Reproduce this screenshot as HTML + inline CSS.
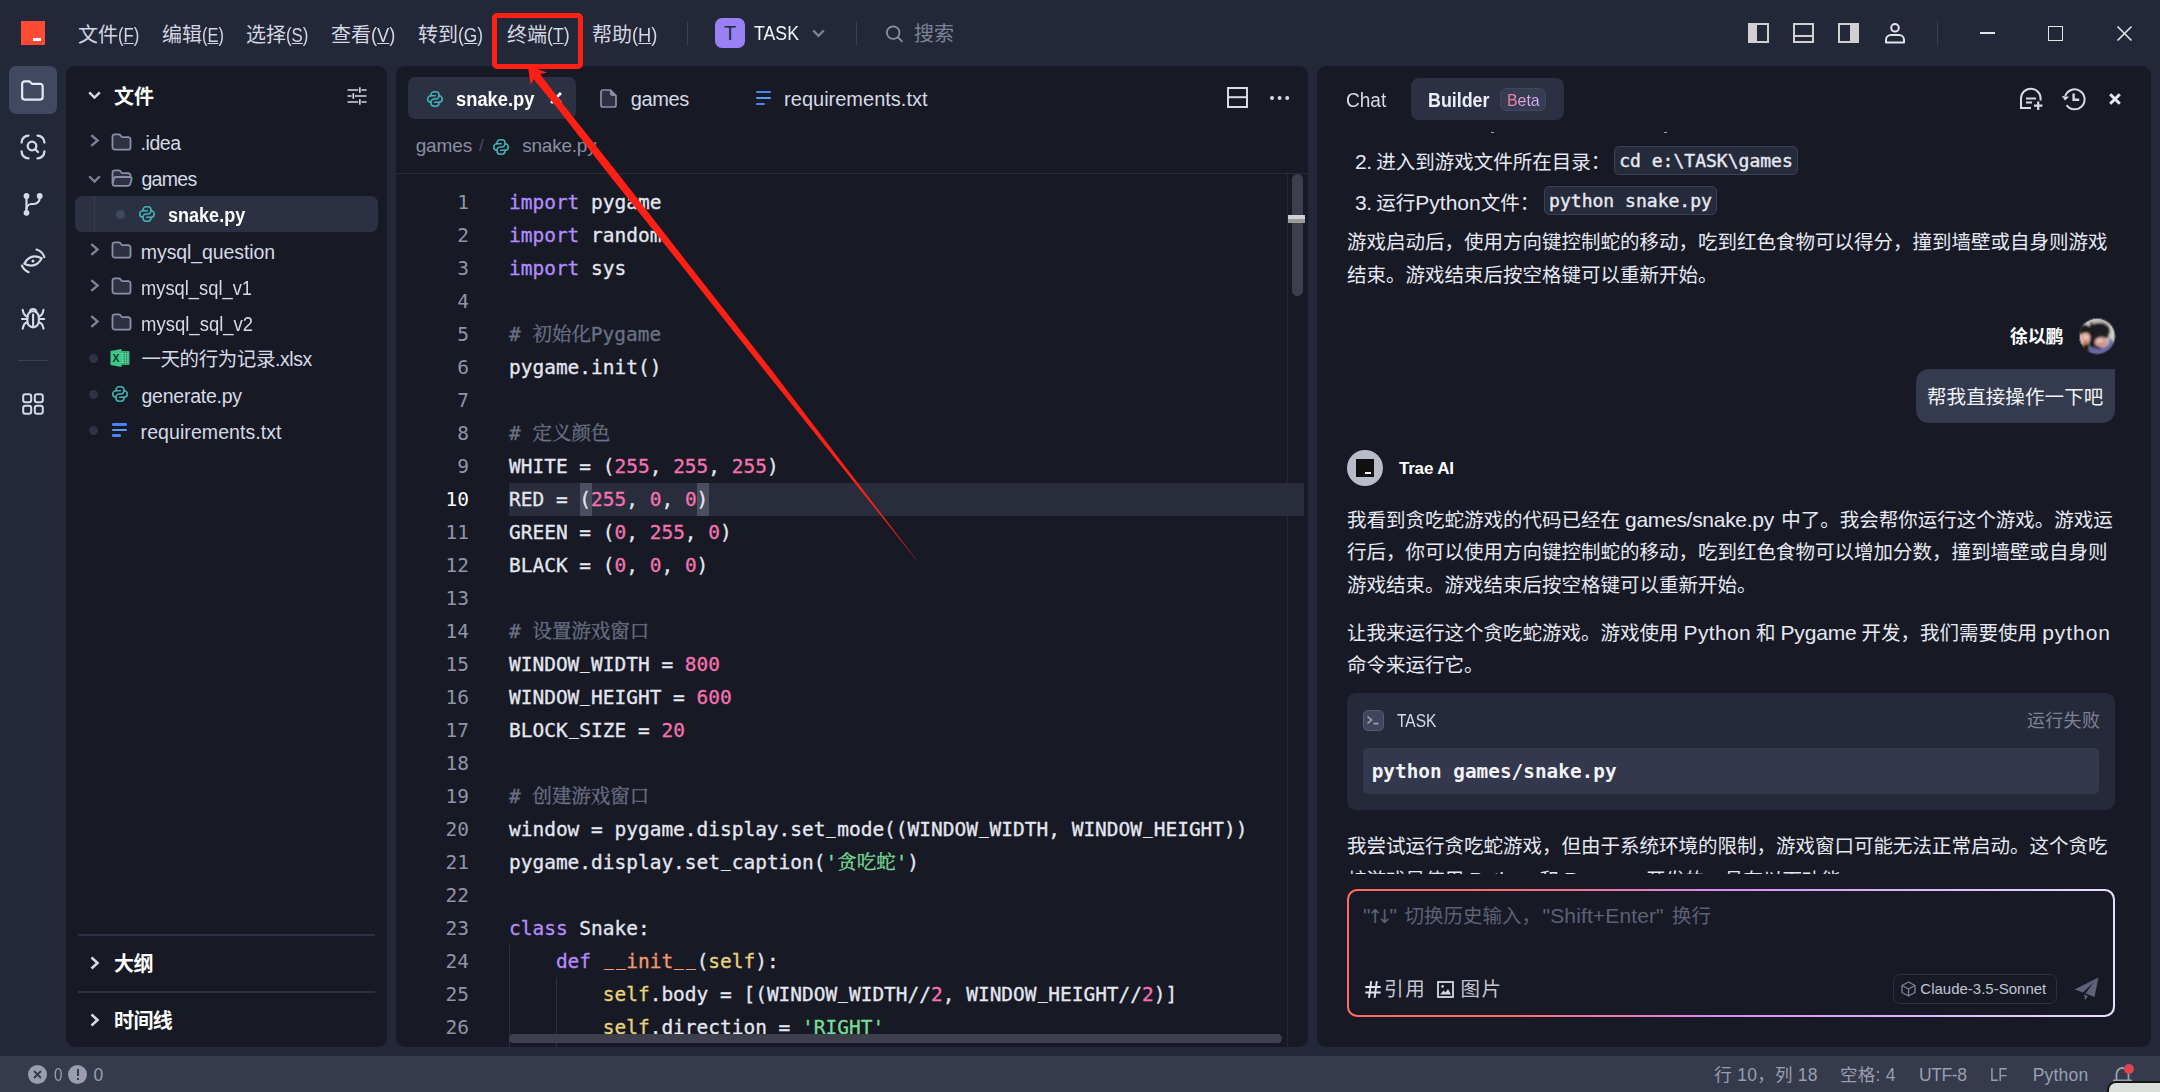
<!DOCTYPE html>
<html lang="zh-CN">
<head>
<meta charset="utf-8">
<title>Trae - snake.py</title>
<style>
*{box-sizing:border-box;margin:0;padding:0}
html,body{width:2160px;height:1092px;overflow:hidden;background:#232838}
body{position:relative;font-family:"Liberation Sans","Noto Sans CJK SC",sans-serif;color:#d6d9e6;font-size:19px}
.abs{position:absolute}
.t{position:absolute;white-space:nowrap;line-height:24px;transform-origin:0 50%}
svg{position:absolute;overflow:visible}
.panel{position:absolute;background:#171a25;border-radius:9px}
.menu{position:absolute;top:22.5px;font-size:20px;line-height:24px;color:#d3d6e3;white-space:nowrap;transform-origin:0 50%}
.ib{display:inline-block;transform-origin:0 50%}
.menu u{text-decoration-thickness:1px;text-underline-offset:1px}
.row{position:absolute;left:141px;font-size:19.5px;line-height:24px;white-space:nowrap;color:#d6d9e6;transform-origin:0 50%}
.code{position:absolute;left:509px;top:186.2px;font-family:"DejaVu Sans Mono","Noto Serif CJK SC",monospace;font-size:19.48px;line-height:33px;white-space:pre;color:#e4e6f0;-webkit-text-stroke:0.3px}
.ln{position:absolute;left:420px;width:49px;top:186.2px;text-align:right;font-family:"DejaVu Sans Mono",monospace;font-size:19.48px;line-height:33px;color:#9094a6;white-space:pre}
.u{display:inline-block;transform:translateY(-2.8px) scaleX(0.82)}
.k{color:#b48cfa}.n{color:#f472b0}.c{color:#6b7085}.s{color:#78dc94}.f{color:#f5976b}.se{color:#e8d37a}
.p{position:absolute;margin-top:1px;left:1347px;font-size:19.5px;line-height:33px;word-spacing:-0.4px;color:#e6e8f2;white-space:nowrap;transform-origin:0 50%}
.la{font-size:21px}
.ic{position:absolute;height:29px;border:1px solid #3a4058;background:#262b3b;border-radius:5px;font-family:"DejaVu Sans Mono",monospace;font-size:18.05px;line-height:27px;color:#e6e8f2;-webkit-text-stroke:0.4px #e6e8f2;white-space:pre;text-align:center}
.st{position:absolute;top:1063px;font-size:17.5px;line-height:24px;color:#9a9eb0;white-space:nowrap;transform-origin:0 50%}
</style>
</head>
<body>
<style>
#m1{transform:scaleX(0.8345)}
#m2{transform:scaleX(0.8200)}
#m3{transform:scaleX(0.8410)}
#m4{transform:scaleX(0.9127)}
#m5{transform:scaleX(0.8667)}
#m6{transform:scaleX(0.8875)}
#m7{transform:scaleX(0.9159)}
#task{transform:scaleX(0.8860);margin-left:-0.09px}
#sch{letter-spacing:-0.090px}
#hfile{letter-spacing:0.090px;margin-left:-0.09px}
#r1{letter-spacing:-0.450px;margin-left:-0.45px}
#r2{letter-spacing:-0.675px;margin-left:0.45px}
#r3{transform:scaleX(0.9250)}
#r4{letter-spacing:-0.090px;margin-left:-0.18px}
#r5{transform:scaleX(0.9401);margin-left:-0.18px}
#r6{transform:scaleX(0.9493);margin-left:-0.18px}
#r7{letter-spacing:-0.417px;margin-left:0.45px}
#r8{letter-spacing:-0.234px;margin-left:0.45px}
#r9{letter-spacing:0.078px;margin-left:-0.45px}
#hout{letter-spacing:-0.540px;margin-left:-0.09px}
#htl{letter-spacing:-0.540px;margin-left:-0.09px}
#tab1{transform:scaleX(0.9160);margin-left:0.60px}
#tab2{letter-spacing:-0.405px;margin-left:0.72px}
#tab3{margin-left:-0.90px}
#bc1{letter-spacing:-0.112px;margin-left:-0.36px}
#bc2{letter-spacing:-0.250px;margin-left:0.30px}
#chat{transform:scaleX(0.9527);margin-left:-0.63px}
#bld{transform:scaleX(0.8922);margin-left:-0.54px}
#beta{transform:scaleX(0.9352);margin-left:-0.45px}
#l1a{letter-spacing:-0.291px}
#l2a{letter-spacing:0.342px}
#l2b{letter-spacing:-0.162px}
#l2c{letter-spacing:0.954px}
#ph2{letter-spacing:0.128px}
#uname{letter-spacing:-0.270px}
#umsg{letter-spacing:0.113px;margin-left:-1.08px}
#trae{letter-spacing:-0.165px;margin-left:0.90px}
#ctask{transform:scaleX(0.8617);margin-left:0.09px}
#cfail{letter-spacing:0.300px}
#ccmd{letter-spacing:0.018px;margin-left:-0.36px}
#model{margin-left:-0.18px}
#yy{letter-spacing:1.710px;margin-left:-0.90px}
#tp{letter-spacing:1.440px;margin-left:-1.44px}
#s1{letter-spacing:0.248px;margin-left:-0.18px}
#s2{letter-spacing:0.248px;margin-left:-0.45px}
#s3{letter-spacing:-0.427px;margin-left:-0.90px}
#s4{transform:scaleX(0.8573);margin-left:-1.71px}
#s5{letter-spacing:0.216px;margin-left:-0.36px}
#z1{transform:scaleX(0.8722);margin-left:0.09px}
</style>
<!-- TITLE BAR -->
<div class="abs" style="left:21px;top:21px;width:24px;height:24px;background:#ff4a36"><div class="abs" style="left:12px;top:17px;width:8px;height:3px;background:#fff"></div></div>
<div class="menu" style="left:78px">文件<span id="m1" class="ib">(<u>F</u>)</span></div>
<div class="menu" style="left:162px">编辑<span id="m2" class="ib">(<u>E</u>)</span></div>
<div class="menu" style="left:246px">选择<span id="m3" class="ib">(<u>S</u>)</span></div>
<div class="menu" style="left:331px">查看<span id="m4" class="ib">(<u>V</u>)</span></div>
<div class="menu" style="left:418px">转到<span id="m5" class="ib">(<u>G</u>)</span></div>
<div class="menu" style="left:507px">终端<span id="m6" class="ib">(<u>T</u>)</span></div>
<div class="menu" style="left:592px">帮助<span id="m7" class="ib">(<u>H</u>)</span></div>
<div class="abs" style="left:687px;top:21px;width:1px;height:24px;background:#3a4055"></div>
<div class="abs" style="left:715px;top:18px;width:30px;height:30px;border-radius:7px;background:#9a80f5;color:#232838;font-size:20px;line-height:30px;text-align:center">T</div>
<div id="task" class="t" style="left:754px;top:21px;font-size:20px;color:#f5f6fa">TASK</div>
<svg style="left:812px;top:29px" width="13" height="9" viewBox="0 0 13 9"><path d="M1.2 1.5 L6.5 6.8 L11.8 1.5" fill="none" stroke="#7d8297" stroke-width="2.4"/></svg>
<div class="abs" style="left:856px;top:21px;width:1px;height:24px;background:#3a4055"></div>
<svg style="left:884px;top:24px" width="20" height="20" viewBox="0 0 20 20"><circle cx="9.2" cy="8.6" r="6.3" fill="none" stroke="#8a8fa3" stroke-width="1.8"/><path d="M13.8 13.2 L18 17.4" stroke="#8a8fa3" stroke-width="1.8" stroke-linecap="round"/></svg>
<div id="sch" class="t" style="left:914px;top:22px;font-size:20px;color:#7d8297">搜索</div>
<!-- right icons -->
<svg style="left:1748px;top:23px" width="21" height="20" viewBox="0 0 21 20"><rect x="1" y="1" width="19" height="18" fill="none" stroke="#d0d0d0" stroke-width="2"/><rect x="1" y="1" width="8" height="18" fill="#d0d0d0"/></svg>
<svg style="left:1793px;top:23px" width="21" height="20" viewBox="0 0 21 20"><rect x="1" y="1" width="19" height="18" fill="none" stroke="#d0d0d0" stroke-width="2"/><path d="M1 13 H20" stroke="#d0d0d0" stroke-width="2"/></svg>
<svg style="left:1838px;top:23px" width="21" height="20" viewBox="0 0 21 20"><rect x="1" y="1" width="19" height="18" fill="none" stroke="#d0d0d0" stroke-width="2"/><rect x="12" y="1" width="8" height="18" fill="#d0d0d0"/></svg>
<svg style="left:1885px;top:23px" width="20" height="21" viewBox="0 0 20 21"><circle cx="10" cy="4.8" r="3.8" fill="none" stroke="#e4e4e8" stroke-width="2"/><path d="M1 19.5 V17 a5 5 0 0 1 5 -5 H14 a5 5 0 0 1 5 5 V19.5 Z" fill="none" stroke="#e4e4e8" stroke-width="2" stroke-linejoin="round"/></svg>
<div class="abs" style="left:1937px;top:21px;width:1px;height:24px;background:#3a4055"></div>
<div class="abs" style="left:1980px;top:32px;width:15px;height:1.5px;background:#e4e4e8"></div>
<div class="abs" style="left:2048px;top:26px;width:15px;height:15px;border:1.8px solid #e4e4e8"></div>
<svg style="left:2117px;top:26px" width="15" height="15" viewBox="0 0 15 15"><path d="M0.5 0.5 L14.5 14.5 M14.5 0.5 L0.5 14.5" stroke="#e4e4e8" stroke-width="1.6"/></svg>
<!-- ACTIVITY BAR -->
<div class="abs" style="left:9px;top:66px;width:48px;height:48px;border-radius:7px;background:#414960"></div>
<svg style="left:21.2px;top:79.6px" width="22.8" height="20.9" viewBox="0 0 24 22"><path d="M1.2 4 a2.6 2.6 0 0 1 2.6 -2.6 h5 l2.6 2.6 h8.8 a2.6 2.6 0 0 1 2.6 2.6 v11.4 a2.6 2.6 0 0 1 -2.6 2.6 h-16.4 a2.6 2.6 0 0 1 -2.6 -2.6 z" fill="none" stroke="#e8eaf3" stroke-width="2.3" stroke-linejoin="round"/></svg>
<!-- scan search -->
<svg style="left:20px;top:134px" width="26" height="26" viewBox="0 0 26 26" fill="none" stroke="#d6d9e6" stroke-width="2.3" stroke-linecap="round"><path d="M1.6 8.5 a7 7 0 0 1 6.9 -6.9"/><path d="M17.5 1.6 a7 7 0 0 1 6.9 6.9"/><path d="M24.4 17.5 a7 7 0 0 1 -6.9 6.9"/><path d="M8.5 24.4 a7 7 0 0 1 -6.9 -6.9"/><circle cx="12" cy="12" r="4.3"/><path d="M15.3 15.3 L18 18"/></svg>
<!-- branch -->
<svg style="left:21px;top:191px" width="24" height="27" viewBox="0 0 24 27" fill="none" stroke="#d6d9e6" stroke-width="2.2"><path d="M5.5 5 V22"/><path d="M18.7 5 v2 a6 6 0 0 1 -6 6 h-2 a5.2 5.2 0 0 0 -5.2 5"/><circle cx="5.5" cy="5" r="2.9" fill="#d6d9e6" stroke="none"/><circle cx="18.7" cy="5" r="2.9" fill="#d6d9e6" stroke="none"/><circle cx="5.5" cy="21.8" r="2.9" fill="#d6d9e6" stroke="none"/></svg>
<!-- eye -->
<svg style="left:19px;top:247px" width="28" height="28" viewBox="0 0 28 28" fill="none" stroke="#d6d9e6" stroke-width="2.1" stroke-linecap="round"><g transform="rotate(-17 14 14)"><path d="M4.8 14 Q14 5.2 23.2 14 Q14 22.8 4.8 14 Z" stroke-linejoin="round"/></g><circle cx="14" cy="14" r="1.5" fill="#d6d9e6" stroke="none"/><path d="M17.5 2.5 A12 12 0 0 1 25.35 10.1"/><path d="M9.7 25.2 A12 12 0 0 1 2.9 18.5"/></svg>
<!-- bug -->
<svg style="left:21px;top:306px" width="24" height="24" viewBox="0 0 24 24" fill="none" stroke="#d6d9e6" stroke-width="2.1" stroke-linecap="round"><path d="M6.4 11.2 a5.7 6 0 0 1 11.4 0 v4 a5.7 6.2 0 0 1 -11.4 0 z"/><path d="M8.9 5.6 a3.3 3.3 0 0 1 6.4 0"/><path d="M12.1 8.5 V21"/><path d="M6.4 10.6 Q2.6 9.4 1.7 3.8"/><path d="M17.8 10.6 Q21.6 9.4 22.5 3.8"/><path d="M6.2 13 H1"/><path d="M18 13 H23.2"/><path d="M6.4 16.4 Q2.6 17 1.7 22.6"/><path d="M17.8 16.4 Q21.6 17 22.5 22.6"/></svg>
<div class="abs" style="left:18px;top:360px;width:30px;height:1px;background:#3a4055"></div>
<!-- grid -->
<svg style="left:22px;top:393px" width="22" height="22" viewBox="0 0 22 22" fill="none" stroke="#d6d9e6" stroke-width="2"><rect x="1.2" y="1.2" width="8" height="8" rx="2.2"/><rect x="12.8" y="1.2" width="8" height="8" rx="2.2"/><rect x="1.2" y="12.8" width="8" height="8" rx="2.2"/><rect x="12.8" y="12.8" width="8" height="8" rx="2.2"/></svg>

<!-- SIDEBAR -->
<div class="panel" style="left:66px;top:66px;width:321px;height:981px"></div>
<svg style="left:88px;top:91px" width="13" height="9" viewBox="0 0 13 9"><path d="M1.2 1.3 L6.5 6.6 L11.8 1.3" fill="none" stroke="#d6d9e6" stroke-width="2.5"/></svg>
<div id="hfile" class="t" style="left:114px;top:85px;font-size:20px;font-weight:bold;color:#fff">文件</div>
<svg style="left:347px;top:87px" width="20" height="18" viewBox="0 0 20 18" fill="none" stroke="#d6d9e6" stroke-width="1.7"><path d="M0.5 3 H11 M14.5 3 H19.5 M12.8 0.3 V5.7"/><path d="M0.5 9 H4.5 M8 9 H19.5 M6.3 6.3 V11.7"/><path d="M0.5 15 H11 M14.5 15 H19.5 M12.8 12.3 V17.7"/></svg>

<!-- selected row -->
<div class="abs" style="left:75px;top:196px;width:303px;height:36px;border-radius:7px;background:#2b3042"></div>
<div class="abs" style="left:94px;top:196px;width:1px;height:36px;background:#363c50"></div>

<!-- chevrons -->
<svg style="left:90px;top:134px" width="10" height="13" viewBox="0 0 10 13"><path d="M1.3 1.2 L7.6 6.5 L1.3 11.8" fill="none" stroke="#7d8297" stroke-width="2.3"/></svg>
<svg style="left:88px;top:175px" width="13" height="9" viewBox="0 0 13 9"><path d="M1.2 1.3 L6.5 6.6 L11.8 1.3" fill="none" stroke="#7d8297" stroke-width="2.3"/></svg>
<svg style="left:90px;top:243px" width="10" height="13" viewBox="0 0 10 13"><path d="M1.3 1.2 L7.6 6.5 L1.3 11.8" fill="none" stroke="#7d8297" stroke-width="2.3"/></svg>
<svg style="left:90px;top:279px" width="10" height="13" viewBox="0 0 10 13"><path d="M1.3 1.2 L7.6 6.5 L1.3 11.8" fill="none" stroke="#7d8297" stroke-width="2.3"/></svg>
<svg style="left:90px;top:315px" width="10" height="13" viewBox="0 0 10 13"><path d="M1.3 1.2 L7.6 6.5 L1.3 11.8" fill="none" stroke="#7d8297" stroke-width="2.3"/></svg>

<!-- folder icons -->
<svg style="left:111px;top:133px" width="21" height="18" viewBox="0 0 21 18"><path id="fold" d="M1.5 3.5 a2.2 2.2 0 0 1 2.2 -2.2 h4 q1 0 1.6 0.8 l1 1.4 q0.5 0.7 1.4 0.7 h5.6 a2.2 2.2 0 0 1 2.2 2.2 v8 a2.2 2.2 0 0 1 -2.2 2.2 h-13.6 a2.2 2.2 0 0 1 -2.2 -2.2 z" fill="#2d3141" stroke="#8a8fa8" stroke-width="1.8"/></svg>
<svg style="left:111px;top:169px" width="22" height="18" viewBox="0 0 22 18"><path d="M1.5 14.5 V3.5 a2.2 2.2 0 0 1 2.2 -2.2 h4 q1 0 1.6 0.8 l1 1.4 q0.5 0.7 1.4 0.7 h5.6 a2.2 2.2 0 0 1 2.2 2.2 v1.6" fill="#2d3141" stroke="#8a8fa8" stroke-width="1.8"/><path d="M3.6 8 h15.4 a1.6 1.6 0 0 1 1.6 2 l-1.3 5 a2.4 2.4 0 0 1 -2.3 1.8 h-13.4 a1.8 1.8 0 0 1 -1.8 -2.3 l1 -4.6 a2 2 0 0 1 1.8 -1.9 z" fill="#2d3141" stroke="#8a8fa8" stroke-width="1.8"/></svg>
<svg style="left:111px;top:241px" width="21" height="18" viewBox="0 0 21 18"><use href="#fold"/></svg>
<svg style="left:111px;top:277px" width="21" height="18" viewBox="0 0 21 18"><use href="#fold"/></svg>
<svg style="left:111px;top:313px" width="21" height="18" viewBox="0 0 21 18"><use href="#fold"/></svg>

<!-- dots -->
<div class="abs" style="left:115.5px;top:210px;width:9px;height:9px;border-radius:5px;background:#414861"></div>
<div class="abs" style="left:88.6px;top:354px;width:9px;height:9px;border-radius:5px;background:#2d3244"></div>
<div class="abs" style="left:88.6px;top:390px;width:9px;height:9px;border-radius:5px;background:#2d3244"></div>
<div class="abs" style="left:88.6px;top:426px;width:9px;height:9px;border-radius:5px;background:#2d3244"></div>

<!-- python icons -->
<svg style="left:139px;top:206px" width="16" height="16" viewBox="2.1 2.1 19.8 19.8" fill="none" stroke="#3fb5b5" stroke-width="1.9" stroke-linecap="round"><g id="py"><path d="M12.3 8 H7 a4 4 0 0 0 0 8"/><path d="M11.7 16 H17 a4 4 0 0 0 0 -8"/><path d="M7 8 v-1 a4 4 0 0 1 4 -4 h2 a4 4 0 0 1 4 4 v1 a4 4 0 0 1 -4 4 h-2 a4 4 0 0 0 -4 4 v1 a4 4 0 0 0 4 4 h2 a4 4 0 0 0 4 -4 v-1"/></g></svg>
<svg style="left:112px;top:386px" width="16" height="16" viewBox="2.1 2.1 19.8 19.8" fill="none" stroke="#3fb5b5" stroke-width="1.9" stroke-linecap="round"><use href="#py"/></svg>

<!-- excel icon -->
<svg style="left:110px;top:349px" width="20" height="18" viewBox="0 0 20 18"><rect x="8" y="2" width="11.5" height="14" rx="1" fill="#2fae72"/><path d="M11 4.6 h7.5 M11 6.8 h7.5 M11 9 h7.5 M11 11.2 h7.5 M11 13.4 h7.5" stroke="#8ee6b8" stroke-width="1"/><path d="M14.2 3 v12 M16.6 3 v12" stroke="#1f8f58" stroke-width="0.8"/><path d="M0.5 2 L11.5 0 V18 L0.5 16 Z" fill="#3fc68a"/><text x="6" y="13" font-family="Liberation Sans,sans-serif" font-weight="bold" font-size="10.5" fill="#17402c" text-anchor="middle">X</text></svg>

<!-- txt icon -->
<div class="abs" style="left:112px;top:423.2px;width:14.8px;height:2.5px;border-radius:1.2px;background:#4b83f2"></div>
<div class="abs" style="left:112px;top:428.6px;width:14.8px;height:2.5px;border-radius:1.2px;background:#5e98ff"></div>
<div class="abs" style="left:112px;top:434px;width:9px;height:2.5px;border-radius:1.2px;background:#4b83f2"></div>

<!-- labels -->
<div id="r1" class="row" style="top:131px">.idea</div>
<div id="r2" class="row" style="top:167px">games</div>
<div id="r3" class="row" style="top:203px;left:168px;font-weight:bold;color:#fff">snake.py</div>
<div id="r4" class="row" style="top:240px">mysql_question</div>
<div id="r5" class="row" style="top:276px">mysql_sql_v1</div>
<div id="r6" class="row" style="top:312px">mysql_sql_v2</div>
<div id="r7" class="row" style="top:347px">一天的行为记录.xlsx</div>
<div id="r8" class="row" style="top:384px">generate.py</div>
<div id="r9" class="row" style="top:420px">requirements.txt</div>

<!-- bottom sections -->
<div class="abs" style="left:78px;top:934px;width:297px;height:2px;background:#2b3042"></div>
<svg style="left:89.5px;top:955.5px" width="10" height="14" viewBox="0 0 10 14"><path d="M1.5 1.5 L7.5 7 L1.5 12.5" fill="none" stroke="#d6d9e6" stroke-width="2.6"/></svg>
<div id="hout" class="t" style="left:114px;top:952px;font-size:20px;font-weight:bold;color:#fff">大纲</div>
<div class="abs" style="left:78px;top:991px;width:297px;height:2px;background:#2b3042"></div>
<svg style="left:89.5px;top:1012.5px" width="10" height="14" viewBox="0 0 10 14"><path d="M1.5 1.5 L7.5 7 L1.5 12.5" fill="none" stroke="#d6d9e6" stroke-width="2.6"/></svg>
<div id="htl" class="t" style="left:114px;top:1009px;font-size:20px;font-weight:bold;color:#fff">时间线</div>
<!-- EDITOR -->
<div class="panel" style="left:396px;top:66px;width:912px;height:981px;overflow:hidden"></div>
<div class="abs" style="left:408px;top:77px;width:168px;height:42px;border-radius:7px;background:#2b3042"></div>
<svg style="left:427px;top:91px" width="16" height="16" viewBox="2.1 2.1 19.8 19.8" fill="none" stroke="#3fb5b5" stroke-width="1.9" stroke-linecap="round"><use href="#py"/></svg>
<div id="tab1" class="t" style="left:455px;top:87px;font-size:20px;font-weight:bold;color:#fff">snake.py</div>
<svg style="left:549.5px;top:92.4px" width="12" height="12" viewBox="0 0 11 11"><path d="M1 1 L10 10 M10 1 L1 10" stroke="#fff" stroke-width="2.6"/></svg>
<svg style="left:600px;top:89px" width="17" height="19" viewBox="0 0 17 19"><path d="M1 3 a2 2 0 0 1 2 -2 h7.5 l5.5 5.5 v9.5 a2 2 0 0 1 -2 2 h-11 a2 2 0 0 1 -2 -2 z" fill="#2d3141" stroke="#8a8fa8" stroke-width="1.7" stroke-linejoin="round"/><path d="M10.5 1 v3.5 a2 2 0 0 0 2 2 h3.5" fill="#8a8fa8" stroke="#8a8fa8" stroke-width="1.2"/></svg>
<div id="tab2" class="t" style="left:630px;top:87px;font-size:20px;color:#d6d9e6">games</div>
<div class="abs" style="left:756.4px;top:90.7px;width:15px;height:2.5px;border-radius:1.2px;background:#4b83f2"></div>
<div class="abs" style="left:756.4px;top:96.9px;width:15px;height:2.5px;border-radius:1.2px;background:#5e98ff"></div>
<div class="abs" style="left:756.4px;top:102.9px;width:8.5px;height:2.5px;border-radius:1.2px;background:#4b83f2"></div>
<div id="tab3" class="t" style="left:785px;top:87px;font-size:20px;color:#d6d9e6">requirements.txt</div>
<svg style="left:1227px;top:87px" width="21" height="21" viewBox="0 0 21 21" fill="none" stroke="#d6d9e6" stroke-width="2"><rect x="1" y="1" width="19" height="19"/><path d="M1 10.2 H20"/></svg>
<div class="abs" style="left:1270px;top:96px;width:4px;height:4px;border-radius:2px;background:#d6d9e6;box-shadow:7.6px 0 0 #d6d9e6,15.2px 0 0 #d6d9e6"></div>
<!-- breadcrumb -->
<div id="bc1" class="t" style="left:416px;top:134px;font-size:19px;color:#8a8fa3">games</div>
<div class="t" style="left:479px;top:134px;font-size:17px;color:#4a5068">/</div>
<svg style="left:493px;top:139px" width="16" height="16" viewBox="2.1 2.1 19.8 19.8" fill="none" stroke="#3fb5b5" stroke-width="1.9" stroke-linecap="round"><use href="#py"/></svg>
<div id="bc2" class="t" style="left:522px;top:134px;font-size:19px;color:#8a8fa3">snake.py</div>
<div class="abs" style="left:396px;top:173px;width:912px;height:1px;background:#262a3a"></div>
<div class="abs" style="left:1287px;top:174px;width:1px;height:873px;background:#232736"></div>
<!-- current line -->
<div class="abs" style="left:509px;top:483px;width:795px;height:33px;background:#282c3b"></div>
<div class="abs" style="left:580px;top:483px;width:12px;height:33px;background:#4a4f5f"></div>
<div class="abs" style="left:697px;top:483px;width:12px;height:33px;background:#4a4f5f"></div>
<!-- indent guides -->
<div class="abs" style="left:509px;top:945px;width:1px;height:102px;background:#2b3042"></div>
<div class="abs" style="left:556px;top:978px;width:1px;height:69px;background:#2b3042"></div>
<div class="ln">1
2
3
4
5
6
7
8
9
<span style="color:#fff">10</span>
11
12
13
14
15
16
17
18
19
20
21
22
23
24
25
26</div>
<div class="abs" style="left:396px;top:174px;width:912px;height:873px;overflow:hidden"><div class="code" style="left:113px;top:12.2px"><span class="k">import</span> pygame
<span class="k">import</span> random
<span class="k">import</span> sys

<span class="c"># 初始化Pygame</span>
pygame.init()

<span class="c"># 定义颜色</span>
WHITE = (<span class="n">255</span>, <span class="n">255</span>, <span class="n">255</span>)
RED = (<span class="n">255</span>, <span class="n">0</span>, <span class="n">0</span>)
GREEN = (<span class="n">0</span>, <span class="n">255</span>, <span class="n">0</span>)
BLACK = (<span class="n">0</span>, <span class="n">0</span>, <span class="n">0</span>)

<span class="c"># 设置游戏窗口</span>
WINDOW<span class="u">_</span>WIDTH = <span class="n">800</span>
WINDOW<span class="u">_</span>HEIGHT = <span class="n">600</span>
BLOCK<span class="u">_</span>SIZE = <span class="n">20</span>

<span class="c"># 创建游戏窗口</span>
window = pygame.display.set<span class="u">_</span>mode((WINDOW<span class="u">_</span>WIDTH, WINDOW<span class="u">_</span>HEIGHT))
pygame.display.set<span class="u">_</span>caption(<span class="s">'贪吃蛇'</span>)

<span class="k">class</span> Snake:
    <span class="k">def</span> <span class="f"><span class="u">_</span><span class="u">_</span>init<span class="u">_</span><span class="u">_</span></span>(<span class="se">self</span>):
        <span class="se">self</span>.body = [(WINDOW<span class="u">_</span>WIDTH//<span class="n">2</span>, WINDOW<span class="u">_</span>HEIGHT//<span class="n">2</span>)]
        <span class="se">self</span>.direction = <span class="s">'RIGHT'</span></div></div>
<!-- scrollbars -->
<div class="abs" style="left:1292px;top:174px;width:11px;height:122px;border-radius:6px;background:#3d404c"></div>
<div class="abs" style="left:1288px;top:215px;width:17px;height:8px;background:linear-gradient(#d0d0d0 0 45%,#9a9a9a 45% 100%)"></div>
<div class="abs" style="left:509px;top:1034px;width:773px;height:9px;border-radius:5px;background:#3d404c"></div>
<!-- CHAT PANEL -->
<div class="panel" style="left:1317px;top:66px;width:834px;height:981px"></div>
<div id="chat" class="t" style="left:1347px;top:88px;font-size:20px;color:#d6d9e6">Chat</div>
<div class="abs" style="left:1411px;top:78px;width:153px;height:42px;border-radius:8px;background:#2b3042"></div>
<div id="bld" class="t" style="left:1429px;top:88px;font-size:20px;font-weight:bold;color:#eceef6">Builder</div>
<div class="abs" style="left:1500px;top:88px;width:46px;height:23px;border-radius:6px;background:#363c52;border:1px solid #40465c"></div>
<div id="beta" class="t" style="left:1507px;top:88.8px;font-size:17px;background:linear-gradient(90deg,#f5748a 0%,#e9a0e0 45%,#d4b4ff 100%);-webkit-background-clip:text;background-clip:text;color:transparent">Beta</div>
<!-- header icons -->
<svg style="left:2019px;top:87px" width="25" height="24" viewBox="0 0 25 24" fill="none" stroke="#d6d9e6" stroke-width="2"><path d="M12 21 H2 V11.5 a9.8 9.8 0 0 1 19.6 0 v2"/><path d="M7 11.5 h10 M7 15.5 h6" stroke-width="1.9"/><path d="M19.2 14.5 v8.4 M15 18.7 h8.4" stroke-width="2.2"/></svg>
<svg style="left:2061px;top:87px" width="25" height="24" viewBox="0 0 25 24" fill="none" stroke="#d6d9e6" stroke-width="2"><path d="M4.2 9 A10 10 0 1 1 5.5 18.2"/><path d="M0.8 9 L4 13.6 L8.2 9.8 Z" fill="#d6d9e6" stroke="none"/><path d="M12.6 6.5 v6.3 h5.6" stroke-width="2.4"/></svg>
<svg style="left:2109px;top:93px" width="12" height="12" viewBox="0 0 12 12"><path d="M1.2 1.2 L10.8 10.8 M10.8 1.2 L1.2 10.8" stroke="#e4e6f0" stroke-width="3"/></svg>

<div class="abs" style="left:1491px;top:132px;width:3px;height:1px;background:#9da1b3"></div>
<div class="abs" style="left:1664px;top:132px;width:3px;height:1px;background:#9da1b3"></div>

<div id="p1" class="p" style="left:1355px;top:144px"><span class="la" style="letter-spacing:-0.55px">2. </span>进入到游戏文件所在目录：</div>
<div class="ic" style="left:1614px;top:146px;width:184px">cd e:\TASK\games</div>
<div id="p2" class="p" style="left:1355px;top:185px"><span class="la" style="letter-spacing:-0.55px">3. </span>运行<span class="la">Python</span>文件：</div>
<div class="ic" style="left:1544px;top:186px;width:173px">python snake.py</div>
<div id="p3" class="p" style="top:225px">游戏启动后，使用方向键控制蛇的移动，吃到红色食物可以得分，撞到墙壁或自身则游戏</div>
<div id="p4" class="p" style="top:258px">结束。游戏结束后按空格键可以重新开始。</div>

<!-- user -->
<div id="uname" class="t" style="left:2010px;top:324.6px;font-size:18px;font-weight:bold;color:#fff">徐以鹏</div>
<svg style="left:2078.8px;top:317.8px" width="36.4" height="36.4" viewBox="0 0 36 36"><defs><clipPath id="avc"><circle cx="18" cy="18" r="18"/></clipPath><filter id="avb" x="-10%" y="-10%" width="120%" height="120%"><feGaussianBlur stdDeviation="0.9"/></filter></defs><g clip-path="url(#avc)"><g filter="url(#avb)"><rect x="-2" y="-2" width="40" height="40" fill="#d6d3d0"/><path d="M6 4 L30 -1 L36 6 L34 10 Z" fill="#b9b4ae"/><path d="M30 6 L38 10 L38 30 L31 30 Z" fill="#cfccc8"/><path d="M9.5 12 L11.5 3.8 L17 8 Z" fill="#15161b"/><ellipse cx="20.5" cy="12.8" rx="10.3" ry="8.2" fill="#1d1c20"/><path d="M12 16 Q14 24 20 21 L28 14 L30 20 L24 18 Z" fill="#1d1c20"/><path d="M9 14 L16 14 L18 30 L10 28 Z" fill="#1a1720"/><ellipse cx="22" cy="24" rx="6.6" ry="5.4" fill="#cfa093"/><ellipse cx="20.5" cy="22.3" rx="3.2" ry="1.4" fill="#e6cdc6"/><path d="M13 17 Q20 12 29 17 L27 20 Q21 17 15 21 Z" fill="#232024"/><ellipse cx="23" cy="26.2" rx="2.2" ry="1.3" fill="#cf8c8a"/><ellipse cx="5.5" cy="11.5" rx="6" ry="5" fill="#1e1b1c"/><ellipse cx="5.8" cy="19.8" rx="5.4" ry="6.2" fill="#dcae9a"/><path d="M-1 12 Q5 8 12 13 L11 16 Q6 13 0.5 17 Z" fill="#1e1b1c"/><ellipse cx="7" cy="18.8" rx="2.2" ry="1.2" fill="#f0d8cc"/><ellipse cx="6.5" cy="23.8" rx="1.8" ry="1" fill="#b83a3a"/><path d="M-1 25 Q5 27 9 25 L12 36 H-1 Z" fill="#1c1510"/><path d="M2 27 L5 26 L5 29 Z" fill="#b8954a"/><path d="M10 23 Q14 27 19 28 Q24 32 29 27 L27 31 L12 33 Z" fill="#1b1530"/><path d="M9 37 Q9 28 14 29 Q22 33 28 27 Q31 23 31 20 Q36 24 37 30 V37 Z" fill="#6668a6"/><path d="M29 21 Q31 19 32 23 L30 27 Z" fill="#7a7cc0"/><path d="M17 30 L17.8 33 L16.6 33 Z" fill="#c07a3a"/></g></g><circle cx="18" cy="18" r="17.6" fill="none" stroke="#2a2d3a" stroke-width="0.8"/></svg>
<div class="abs" style="left:1916px;top:369px;width:199px;height:54px;border-radius:13px 0 13px 13px;background:#353b4e"></div>
<div id="umsg" class="p" style="left:1928px;top:380px;color:#f2f3f8">帮我直接操作一下吧</div>

<!-- Trae AI -->
<div class="abs" style="left:1347px;top:450px;width:36px;height:36px;border-radius:18px;background:#b8bcc8"></div>
<div class="abs" style="left:1356px;top:459px;width:18px;height:18px;background:#111"><div class="abs" style="left:9px;top:13px;width:6px;height:2px;background:#fff"></div></div>
<div id="trae" class="t" style="left:1398px;top:456.8px;font-size:17px;font-weight:bold;color:#fff">Trae AI</div>
<div id="p5" class="p" style="top:502px">我看到贪吃蛇游戏的代码已经在 <span id="l1a" class="la" style="padding-right:2.4px">games/snake.py</span> 中了。我会帮你运行这个游戏。游戏运</div>
<div id="p6" class="p" style="top:535px">行后，你可以使用方向键控制蛇的移动，吃到红色食物可以增加分数，撞到墙壁或自身则</div>
<div id="p7" class="p" style="top:568px">游戏结束。游戏结束后按空格键可以重新开始。</div>
<div id="p8" class="p" style="top:615px">让我来运行这个贪吃蛇游戏。游戏使用 <span id="l2a" class="la">Python</span> 和 <span id="l2b" class="la">Pygame</span> 开发，我们需要使用 <span id="l2c" class="la">python</span></div>
<div id="p9" class="p" style="top:648px">命令来运行它。</div>

<!-- command card -->
<div class="abs" style="left:1347px;top:693px;width:768px;height:117px;border-radius:9px;background:#252a3a"></div>
<div class="abs" style="left:1363px;top:710px;width:21px;height:21px;border-radius:5px;background:#3f455a;border:1px solid #555b72"></div>
<svg style="left:1366px;top:714px" width="15" height="13" viewBox="0 0 15 13" fill="none" stroke="#a0a5b8" stroke-width="1.6"><path d="M1.5 2.5 L5.5 6 L1.5 9.5"/><path d="M7.5 9.6 H12.5"/></svg>
<div id="ctask" class="t" style="left:1397px;top:709px;font-size:18px;color:#d6d9e6">TASK</div>
<div id="cfail" class="t" style="left:2027px;top:709px;font-size:18px;color:#7d8297">运行失败</div>
<div class="abs" style="left:1363px;top:748px;width:736px;height:46px;border-radius:5px;background:#33384c"></div>
<div id="ccmd" class="t" style="left:1372px;top:760.2px;font-family:'DejaVu Sans Mono',monospace;font-weight:bold;font-size:19.35px;color:#f2f3f8">python games/snake.py</div>

<div id="p10" class="p" style="top:829px">我尝试运行贪吃蛇游戏，但由于系统环境的限制，游戏窗口可能无法正常启动。这个贪吃</div>
<div class="abs" style="left:1347px;top:862px;width:790px;height:12px;overflow:hidden"><div id="p11" class="p" style="left:0;top:0">蛇游戏是使用 <span class="la">Python</span> 和 <span class="la">Pygame</span> 开发的，具有以下功能：</div></div>

<!-- input -->
<div class="abs" style="left:1347px;top:889px;width:768px;height:128px;border-radius:10px;background:linear-gradient(90deg,#ff6b5e 0%,#fb6c72 22%,#ee78b4 36%,#d98cf0 48%,#dcb0f8 70%,#e8deff 100%)"></div>
<div class="abs" style="left:1348.8px;top:890.8px;width:764.4px;height:124.4px;border-radius:8.5px;background:#171a25"></div>
<div id="p12" class="p" style="left:1363px;top:898px;color:#5c6175"><span id="ph1" class="la" style="margin-right:2.5px">"<span style="font-family:'DejaVu Sans',sans-serif;font-size:19px;letter-spacing:-6.4px;margin-left:-3.2px;margin-right:3.2px">↑↓</span>"</span> 切换历史输入，<span id="ph2" class="la" style="margin-left:1.6px;margin-right:3.2px">"Shift+Enter"</span> 换行</div>
<svg style="left:1365px;top:980.5px" width="16" height="17" viewBox="0 0 16 17" fill="none" stroke="#e0e2ec" stroke-width="1.9"><path d="M0.3 6 H15.7 M0.3 11.5 H15.7 M6.2 0.2 L4 16.8 M11.8 0.2 L9.6 16.8"/></svg>
<div id="yy" class="t" style="left:1385px;top:977px;font-size:19.5px;color:#c3c6d4">引用</div>
<svg style="left:1437px;top:981px" width="17" height="17" viewBox="0 0 17 17"><rect x="1" y="1" width="15" height="15" fill="none" stroke="#d6d9e6" stroke-width="1.8"/><path d="M3 13.5 L6.5 9.5 L8.5 11.5 L11 8 L14 13.5 Z" fill="#d6d9e6"/><circle cx="5.6" cy="5.4" r="1.3" fill="#d6d9e6"/></svg>
<div id="tp" class="t" style="left:1462px;top:977px;font-size:19.5px;color:#c3c6d4">图片</div>
<div class="abs" style="left:1893px;top:974px;width:164px;height:30px;border-radius:7px;border:1px solid #2b3042"></div>
<svg style="left:1901px;top:981px" width="15" height="16" viewBox="0 0 15 16" fill="none" stroke="#7d8297" stroke-width="1.3" stroke-linejoin="round"><path d="M7.5 1 L14 4.5 V11.5 L7.5 15 L1 11.5 V4.5 Z"/><path d="M1 4.5 L7.5 8 L14 4.5 M7.5 8 V15"/></svg>
<div id="model" class="t" style="left:1920.5px;top:977px;font-size:15px;color:#c0c4d2">Claude-3.5-Sonnet</div>
<svg style="left:2074px;top:977px" width="25" height="24" viewBox="0 0 25 24"><path d="M24.5 0.5 L0.5 12.5 L9 15.5 L20 5 L11.5 16.5 L20.5 20 Z" fill="#5c6378"/><path d="M10.2 17.5 L13.8 19 L11 23.5 Z" fill="#5c6378"/></svg>
<!-- STATUS BAR -->
<div class="abs" style="left:0;top:1056px;width:2160px;height:36px;background:#353b4d"></div>
<div class="abs" style="left:28px;top:1065px;width:19px;height:19px;border-radius:10px;background:#999daf"></div>
<svg style="left:33px;top:1070px" width="9" height="9" viewBox="0 0 9 9"><path d="M1 1 L8 8 M8 1 L1 8" stroke="#353b4d" stroke-width="1.9"/></svg>
<div id="z1" class="st" style="left:53.5px">0</div>
<div class="abs" style="left:68px;top:1065px;width:19px;height:19px;border-radius:10px;background:#999daf"></div>
<div class="abs" style="left:76.5px;top:1069px;width:2.2px;height:7px;background:#353b4d"></div>
<div class="abs" style="left:76.5px;top:1077.6px;width:2.2px;height:2.4px;background:#353b4d"></div>
<div id="z2" class="st" style="left:93.5px">0</div>
<div id="s1" class="st" style="left:1714.5px">行 10，列 18</div>
<div id="s2" class="st" style="left:1840.5px">空格: 4</div>
<div id="s3" class="st" style="left:1920px">UTF-8</div>
<div id="s4" class="st" style="left:1992px">LF</div>
<div id="s5" class="st" style="left:2033px">Python</div>
<svg style="left:2113px;top:1064px" width="20" height="22" viewBox="0 0 20 22" fill="none" stroke="#9a9eb0" stroke-width="1.8"><path d="M3.5 16.5 V10 a6 6 0 0 1 12 0 V16.5"/><path d="M0.8 16.5 H18.2" stroke-linecap="round"/></svg>
<div class="abs" style="left:2124px;top:1064px;width:9.5px;height:9.5px;border-radius:5px;background:#e0454f"></div>
<div class="abs" style="left:2107px;top:1081px;width:60px;height:20px;border-radius:9px 0 0 0;background:#d9ded9;border:2.5px solid #161616"></div>
<!-- ANNOTATION -->
<div class="abs" style="left:491.5px;top:12.7px;width:91px;height:56px;border:5px solid #ff2015;border-radius:5px"></div>
<svg style="left:0;top:0" width="2160" height="1092" viewBox="0 0 2160 1092"><polygon points="528.2,68.4 536.1,68.4 546.9,72.5 540.1,74.3 566,108 615.2,170 693.1,270 771.5,370 920.8,565.5 764.2,370 685.1,270 605.3,170 557.2,108 533.7,79.3 530.6,84.8" fill="#ff2015"/></svg>
</body>
</html>
